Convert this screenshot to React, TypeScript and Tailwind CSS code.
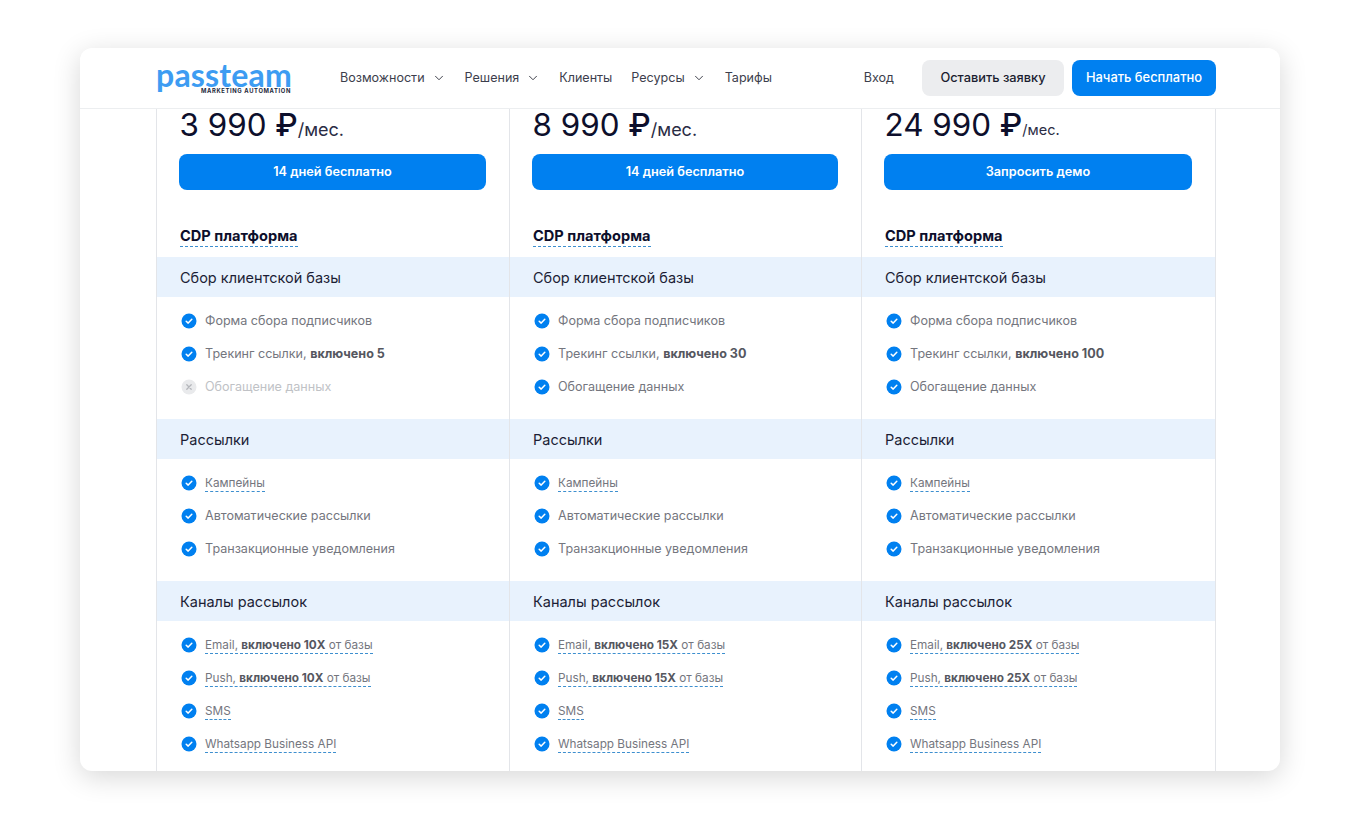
import { ChevronDown } from "lucide-react";

type Feature = {
  text: string;
  bold?: string;
  tail?: string;
  dashed?: boolean;
  off?: boolean;
};

type Plan = {
  price: string;
  unitClass: string;
  cta: string;
  links: number;
  volume: string;
  enrich: boolean;
};

const plans: Plan[] = [
  { price: "3 990", unitClass: "text-[18px]", cta: "14 дней бесплатно", links: 5, volume: "10X", enrich: false },
  { price: "8 990", unitClass: "text-[18px]", cta: "14 дней бесплатно", links: 30, volume: "15X", enrich: true },
  { price: "24 990", unitClass: "text-[14.5px]", cta: "Запросить демо", links: 100, volume: "25X", enrich: true },
];

function CheckIcon({ off }: { off?: boolean }) {
  if (off) {
    return (
      <svg width="16" height="16" viewBox="0 0 16 16" className="shrink-0">
        <circle cx="8" cy="8" r="7.5" fill="#e9eaec" />
        <path d="M5.8 5.8l4.4 4.4M10.2 5.8l-4.4 4.4" stroke="#b4b6bb" strokeWidth="1.3" strokeLinecap="round" />
      </svg>
    );
  }
  return (
    <svg width="16" height="16" viewBox="0 0 16 16" className="shrink-0">
      <circle cx="8" cy="8" r="7.5" fill="#0080f0" />
      <path d="M5.2 8.2l2 1.9 3.6-3.8" fill="none" stroke="#fff" strokeWidth="1.5" strokeLinecap="round" strokeLinejoin="round" />
    </svg>
  );
}

function FeatureRow({ item }: { item: Feature }) {
  const color = item.off ? "text-[#c0c2c6]" : "text-[#74767e]";
  return (
    <li className="flex h-[33px] items-center gap-[8px] pl-[24px]">
      <CheckIcon off={item.off} />
      <span
        className={`${color} ${
          item.dashed
            ? "border-b border-dashed border-[#3d8fcf] pt-[2px] text-[11.75px] leading-[15px]"
            : "text-[12.55px] leading-[17px]"
        }`}
      >
        {item.text}
        {item.bold && <b className="font-bold text-[#55575f]">{item.bold}</b>}
        {item.tail}
      </span>
    </li>
  );
}

function Section({ title, items }: { title: string; items: Feature[] }) {
  return (
    <section>
      <h3 className="flex h-[40px] items-center bg-[#e8f2fd] pl-[23px] pt-[1px] text-[14.5px] text-[#1c1e36]">{title}</h3>
      <ul className="pb-[16px] pt-[7px]">
        {items.map((item) => (
          <FeatureRow key={item.text + (item.bold ?? "")} item={item} />
        ))}
      </ul>
    </section>
  );
}

function PlanColumn({ plan, last }: { plan: Plan; last: boolean }) {
  const { price, unitClass, cta, links, volume, enrich } = plan;
  return (
    <div className={`border-l border-[#e3e5e9] ${last ? "border-r" : ""}`}>
      <div className="flex h-[45px] items-start pl-[22.5px]">
        <span className="text-[31.4px] leading-[33px] text-[#0d0f2c]">
          {price} <span className="font-medium">₽</span>
        </span>
        <span className={`${unitClass} mt-[8px] leading-[26px] text-[#2a2c44]`}>/мес.</span>
      </div>
      <div className="pl-[22px] pr-[23px]">
        <button
          type="button"
          className="flex h-[36px] w-full items-center justify-center rounded-[8px] bg-[#0080f0] text-[12.7px] font-semibold text-white"
        >
          {cta}
        </button>
      </div>
      <div className="flex h-[67px] items-end pb-[10px] pl-[23px]">
        <span className="border-b border-dashed border-[#3d8fcf] pb-[1px] text-[14.6px] font-bold leading-[17px] text-[#0d0f2c]">
          CDP платформа
        </span>
      </div>
      <Section
        title="Сбор клиентской базы"
        items={[
          { text: "Форма сбора подписчиков" },
          { text: "Трекинг ссылки, ", bold: `включено ${links}` },
          { text: "Обогащение данных", off: !enrich },
        ]}
      />
      <Section
        title="Рассылки"
        items={[
          { text: "Кампейны", dashed: true },
          { text: "Автоматические рассылки" },
          { text: "Транзакционные уведомления" },
        ]}
      />
      <Section
        title="Каналы рассылок"
        items={[
          { text: "Email, ", bold: `включено ${volume}`, tail: " от базы", dashed: true },
          { text: "Push, ", bold: `включено ${volume}`, tail: " от базы", dashed: true },
          { text: "SMS", dashed: true },
          { text: "Whatsapp Business API", dashed: true },
        ]}
      />
    </div>
  );
}

function NavItem({ label, menu }: { label: string; menu?: boolean }) {
  return (
    <a className="flex items-center gap-[7px] text-[12.55px] text-[#3c3e4c]">
      {label}
      {menu && <ChevronDown size={14} strokeWidth={1.6} className="text-[#33353f]" />}
    </a>
  );
}

export default function App() {
  return (
    <div
      className="flex h-[818px] items-start overflow-hidden bg-white pl-[80px] pt-[48px]"
      style={{ fontFamily: "Inter, 'Noto Sans', sans-serif" }}
    >
      <div className="h-[723px] w-[1200px] overflow-hidden rounded-[12px] bg-white shadow-[0_6px_28px_rgba(0,0,0,0.16)]">
        <header className="flex h-[61px] items-center border-b border-[#eceef0] pl-[76px] pr-[64px]">
          <div className="w-[184px] shrink-0 select-none">
            <div
              className="text-[32px] font-bold leading-[26px] tracking-[0.2px] text-[#3d9cf2]"
              style={{ fontFamily: "Lato, sans-serif" }}
            >
              passteam
            </div>
            <div className="w-[135px] text-right text-[5.8px] font-bold leading-[6px] tracking-[0.65px] text-[#23283a]">
              MARKETING AUTOMATION
            </div>
          </div>
          <nav className="flex items-center gap-[19px]">
            <NavItem label="Возможности" menu />
            <NavItem label="Решения" menu />
            <NavItem label="Клиенты" />
            <NavItem label="Ресурсы" menu />
            <NavItem label="Тарифы" />
          </nav>
          <a className="ml-auto mr-[28px] text-[12.6px] text-[#3c3e4c]">Вход</a>
          <button
            type="button"
            className="mr-[8px] h-[36px] w-[142px] rounded-[8px] bg-[#ecedef] text-[12.8px] font-medium text-[#1b1d30]"
          >
            Оставить заявку
          </button>
          <button
            type="button"
            className="h-[36px] w-[144px] rounded-[8px] bg-[#0080f0] text-[12.9px] font-medium text-white"
          >
            Начать бесплатно
          </button>
        </header>
        <main className="ml-[76px] grid w-[1060px] grid-cols-[353px_352px_355px] bg-white">
          {plans.map((plan, i) => (
            <PlanColumn key={plan.price} plan={plan} last={i === plans.length - 1} />
          ))}
        </main>
      </div>
    </div>
  );
}
